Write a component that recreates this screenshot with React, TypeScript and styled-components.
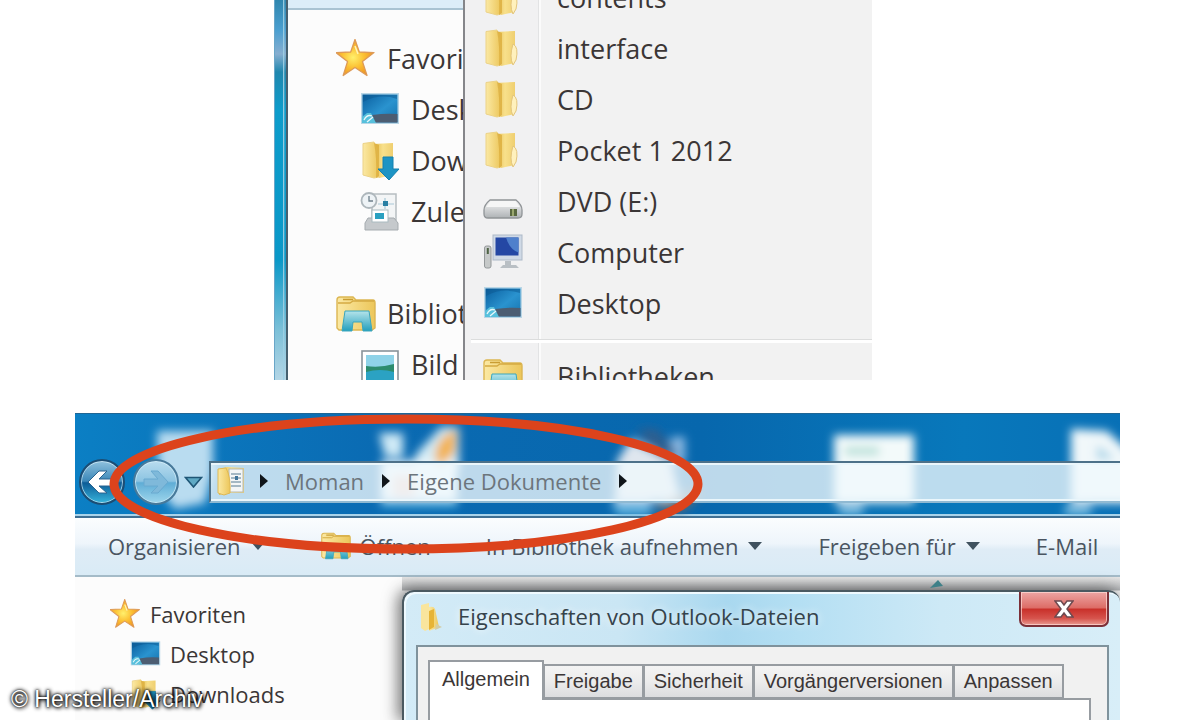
import React from "react";
import styled, { createGlobalStyle } from "styled-components";

const GlobalStyle = createGlobalStyle`
  * { box-sizing: border-box; }
  body {
    margin: 0;
    background: #ffffff;
    font-family: "Open Sans", "Noto Sans", sans-serif;
    color: #3b3636;
  }
  button { font: inherit; color: inherit; border: 0; padding: 0; background: none; }
  a { color: inherit; text-decoration: none; }
  ul { list-style: none; margin: 0; padding: 0; }
  svg { display: block; flex: none; }
`;

const Page = styled.main`
  position: relative;
  display: flex;
  flex-direction: column;
  gap: 33px;
  height: 100vh;
  min-height: 720px;
  overflow: hidden;
`;

/* ---------- upper window: jump menu over the navigation pane ---------- */

const MenuShot = styled.section`
  display: grid;
  grid-template-columns: 14px 175px 1fr;
  flex: none;
  height: 380px;
  margin: 0 328px 0 274px;
  overflow: hidden;
`;

const WindowEdge = styled.div`
  border-left: 1px solid #6aa6c8;
  border-right: 2px solid #46606f;
  background: linear-gradient(90deg, transparent 70%, #9fd0e4 76%, transparent 90%),
    linear-gradient(#2f86ae 0, #4a9fd0 30px, #86aed0 54px, #1f87ae 72px, #0d9ccb 110px, #0a98c8 260px, #7cc0d8 330px, #b4d6e6 380px);
`;

const NavPane = styled.nav`
  overflow: hidden;
  background: #fcfcfc;
  font-size: 27px;
`;

const NavBand = styled.div`
  height: 10px;
  margin-bottom: 23px;
  border-bottom: 2px solid #a9c3d2;
  background: #dcedf8;
`;

const NavGroup = styled.ul`
  margin-bottom: 51px;
`;

const NavLink = styled.a<{ $nested?: boolean }>`
  display: flex;
  align-items: center;
  gap: 11px;
  height: 51px;
  padding-left: ${(p) => (p.$nested ? 72 : 48)}px;
  white-space: nowrap;
`;

const JumpMenu = styled.div`
  min-width: 0;
  overflow: hidden;
  border-left: 2px solid #85868a;
  background: linear-gradient(90deg, #f1f1f2 73px, #e2e3e4 73px, #e2e3e4 74px, #fbfbfb 74px, #fbfbfb 76px, #f2f2f2 76px);
  font-size: 27px;
`;

const JumpList = styled.ul<{ $scrolled?: boolean }>`
  margin-top: ${(p) => (p.$scrolled ? "-28px" : "0")};
`;

const JumpItem = styled.button`
  display: flex;
  align-items: center;
  gap: 34px;
  width: 100%;
  height: 51px;
  padding-left: 18px;
  text-align: left;
  white-space: nowrap;
`;

const JumpDivider = styled.hr`
  height: 4px;
  margin: 10px 0 8px 6px;
  border: 0;
  border-top: 1px solid #dcdddd;
  background: #ffffff;
`;

/* ---------- lower window: explorer with properties dialog ---------- */

const Explorer = styled.section`
  position: relative;
  display: flex;
  flex: 1;
  flex-direction: column;
  margin: 0 80px 0 75px;
  overflow: hidden;
  font-size: 22px;
`;

const GlassBar = styled.header`
  position: relative;
  display: flex;
  flex: none;
  align-items: center;
  height: 105px;
  padding: 34px 0 0 4px;
  border-bottom: 2px solid #3f6f93;
  background: linear-gradient(90deg, #0b7fc4, #0a6ab2 30%, #0767ad 60%, #0878bb 85%, #0870b6);
  box-shadow: inset 0 1px 0 #1f6695, inset 0 -2px 0 #a9d3ea;
`;

const Reflections = styled.svg`
  position: absolute;
  inset: 0;
  width: 100%;
  height: 100%;
`;

const RoundNav = styled.button<{ $faded?: boolean }>`
  position: relative;
  display: grid;
  place-items: center;
  flex: none;
  width: 46px;
  height: 46px;
  margin-right: ${(p) => (p.$faded ? 5 : 8)}px;
  border: 2px solid ${(p) => (p.$faded ? "#47799a" : "#1c4d74")};
  border-radius: 50%;
  background: ${(p) =>
    p.$faded
      ? "linear-gradient(#b9dcee 0, #8cc4e2 48%, #5fadd6 52%, #9ed6ec)"
      : "linear-gradient(#8fc1de 0, #3b87b8 48%, #0c5c97 52%, #37b4dc)"};
  box-shadow: inset 0 0 0 1px rgba(220, 242, 252, 0.7);
`;

const HistoryButton = styled.button`
  position: relative;
  margin-right: 6px;
`;

const AddressBar = styled.nav`
  position: relative;
  display: flex;
  flex: 1;
  align-items: center;
  height: 42px;
  padding: 0 0 2px 6px;
  border: solid #4d7189;
  border-width: 2px 0 2px 2px;
  border-bottom-color: #8fb9d2;
  background: rgba(240, 248, 252, 0.78);
  box-shadow: inset 0 2px 0 #eaf6fb, inset 0 -2px 0 #eaf6fb;
`;

const PlaceIcon = styled.span`
  margin-right: 12px;
`;

const Crumb = styled.button`
  margin: 0 17px;
  color: #6c757c;
  white-space: nowrap;
`;

const CommandBar = styled.div`
  display: flex;
  flex: none;
  align-items: center;
  height: 59px;
  padding: 0 0 2px 33px;
  border-bottom: 2px solid #a4bbc8;
  background: linear-gradient(#fbfdfe, #eef5fb 45%, #dfecf6 55%, #d9ebf6);
  color: #4a5561;
`;

const Command = styled.button`
  display: flex;
  flex: none;
  align-items: center;
  gap: 9px;
  margin-right: 55px;
  white-space: nowrap;
`;

const Content = styled.div`
  display: grid;
  flex: 1;
  grid-template-columns: 327px 1fr;
  min-height: 0;
  background: #fcfcfc;
`;

const SideNav = styled.nav`
  padding-top: 17px;
`;

const SideLink = styled.a<{ $nested?: boolean }>`
  display: flex;
  align-items: center;
  gap: 9px;
  height: 40px;
  padding-left: ${(p) => (p.$nested ? 55 : 35)}px;
  white-space: nowrap;
`;

const DialogArea = styled.div`
  display: flex;
  position: relative;
  min-width: 0;
  padding-top: 13px;
  background: linear-gradient(#e6e6e6, #b4b6b8 13px, transparent 14px);
`;

const SortMark = styled.svg`
  position: absolute;
  right: 176px;
  top: 2px;
`;

const Dialog = styled.section`
  display: flex;
  flex: 1;
  flex-direction: column;
  min-width: 0;
  padding-right: 11px;
  border: solid #4a5961;
  border-width: 2px 0 0 2px;
  border-radius: 12px 12px 0 0;
  background: linear-gradient(90deg, #d3ebf7, #cae6f4 30%, #a9d8ef 45%, #b4dff3 55%, #cde9f6 75%, #d8eef8);
  box-shadow: -3px 0 15px 1px rgba(40, 40, 40, 0.65), inset 2px 2px 0 #effaff;
`;

const DialogTitle = styled.header`
  display: flex;
  align-items: flex-start;
  height: 53px;
  padding-left: 14px;
`;

const DialogName = styled.h2`
  flex: 1;
  margin: 0 0 0 12px;
  font-size: 22px;
  font-weight: 400;
  line-height: 49px;
  color: #35434b;
  white-space: nowrap;
  text-shadow: 0 0 8px #ffffff;
`;

const TitleIcon = styled.div`
  padding-top: 10px;
`;

const CloseButton = styled.button`
  display: grid;
  place-items: center;
  width: 90px;
  height: 35px;
  border: 2px solid #7c3038;
  border-top: 0;
  border-radius: 0 0 7px 7px;
  background: linear-gradient(#eda6a4, #dd6c66 48%, #c9302a 52%, #d6544d 80%, #e99a90);
  box-shadow: inset 0 0 0 1px rgba(255, 220, 215, 0.7);
`;

const DialogBody = styled.div`
  display: flex;
  flex: 1;
  flex-direction: column;
  margin-left: 12px;
  padding: 13px 16px 0 10px;
  border: 2px solid #7f929c;
  border-bottom: 0;
  background: #f1f1f1;
`;

const TabList = styled.div`
  display: flex;
  align-items: flex-end;
  height: 38px;
`;

const Tab = styled.button<{ $active?: boolean }>`
  position: relative;
  flex: none;
  height: ${(p) => (p.$active ? 40 : 34)}px;
  margin: ${(p) => (p.$active ? "0 0 -2px" : "0")};
  padding: ${(p) => (p.$active ? "0 12px 3px" : "0 9px")};
  z-index: ${(p) => (p.$active ? 1 : 0)};
  border: 2px solid #979ca1;
  border-bottom-width: ${(p) => (p.$active ? 0 : 1)}px;
  border-left-width: ${(p) => (p.$active ? 2 : 1)}px;
  background: ${(p) => (p.$active ? "#ffffff" : "linear-gradient(#f4f4f4, #ececec 50%, #dcdddf)")};
  font-family: "Liberation Sans", Arial, sans-serif;
  font-size: 20px;
  white-space: nowrap;
`;

const TabPanel = styled.div`
  flex: 1;
  border: 2px solid #979ca1;
  border-bottom: 0;
  background: #ffffff;
`;

const Highlight = styled.svg`
  position: absolute;
  left: 30px;
  top: 0;
  pointer-events: none;
`;

const Credit = styled.small`
  position: absolute;
  left: 11px;
  bottom: 7px;
  color: #ffffff;
  font-family: "Liberation Sans", Arial, sans-serif;
  font-size: 23px;
  line-height: 28px;
  text-shadow: 0 0 2px #000000, 0 0 4px #000000, 1px 1px 4px #000000;
`;

/* ---------- icons ---------- */

type IconProps = { size?: number };

const Gradients = () => (
  <svg width="0" height="0" style={{ position: "absolute" }} aria-hidden="true">
    <defs>
      <linearGradient id="gold" x1="0" x2="1">
        <stop offset="0" stopColor="#fbe9a4" />
        <stop offset="1" stopColor="#ecc65a" />
      </linearGradient>
      <linearGradient id="goldBack" x1="0" x2="1">
        <stop offset="0" stopColor="#e3b849" />
        <stop offset="0.5" stopColor="#f8e08b" />
        <stop offset="1" stopColor="#efcf70" />
      </linearGradient>
      <radialGradient id="star" cx="0.45" cy="0.5" r="0.55">
        <stop offset="0" stopColor="#fff06c" />
        <stop offset="0.5" stopColor="#fcc235" />
        <stop offset="1" stopColor="#ef9420" />
      </radialGradient>
      <linearGradient id="screen" x1="0" y1="0" x2="1" y2="1">
        <stop offset="0" stopColor="#0a5f9f" />
        <stop offset="0.55" stopColor="#2a93cf" />
        <stop offset="1" stopColor="#1673ae" />
      </linearGradient>
      <linearGradient id="metal" x1="0" y1="0" x2="0" y2="1">
        <stop offset="0" stopColor="#f8f8f8" />
        <stop offset="1" stopColor="#aeb2b5" />
      </linearGradient>
      <linearGradient id="teal" x1="0" y1="0" x2="0" y2="1">
        <stop offset="0" stopColor="#b5e4ea" />
        <stop offset="1" stopColor="#239fbd" />
      </linearGradient>
    </defs>
  </svg>
);

const StarIcon = ({ size = 40 }: IconProps) => (
  <svg width={size} height={size} viewBox="0 0 40 40">
    <path d="M19 .5l4.300 12.500 14.700.6-11.500 9L31 36.500 19 28.500 7.200 36.500 11.500 22.600 0 13.600l14.700-.6z" fill="url(#star)" stroke="#dd9a58" strokeWidth="1.300" strokeLinejoin="round" />
    <path d="M19 7l3 8" stroke="#fff3b8" strokeWidth="1.500" />
  </svg>
);

const DesktopIcon = ({ size = 40 }: IconProps) => (
  <svg width={size} height={size} viewBox="0 0 40 40">
    <rect x="1" y="3" width="38" height="31" fill="#b9d6e6" />
    <rect x="2.500" y="4.500" width="35" height="28" fill="url(#screen)" />
    <path d="M12 25q14-2 25.500-1v8.500H12z" fill="#4c5d72" />
    <path d="M3 12Q20 3 37 9V5H3z" fill="#0b5790" opacity=".5" />
    <path d="M2 33v-6l5-4h4l5 10z" fill="#57c0dc" />
    <path d="M4 30q3-6 8-4M7 32l6-5" fill="none" stroke="#e8f8fb" strokeWidth="1.300" />
  </svg>
);

const FolderShape = () => (
  <>
    <path d="M12 3l20-1v32l-14 3z" fill="url(#goldBack)" />
    <path d="M3 2.500l11-1.500q4 10 4 35l-4 1-11-3z" fill="url(#gold)" stroke="#ecd287" strokeWidth="1" />
    <path d="M14 2l5 2v31l-3 2Q17 16 14 2z" fill="#dcae3c" opacity=".8" />
    <path d="M30 15q6 3 3 16l-3 5q-4-8 0-21z" fill="#fff1bd" stroke="#e3c57c" strokeWidth="1" />
  </>
);

const FolderIcon = ({ size = 40 }: IconProps) => (
  <svg width={size} height={size} viewBox="0 0 40 40">
    <FolderShape />
  </svg>
);

const DownloadsIcon = ({ size = 40 }: IconProps) => (
  <svg width={size} height={size} viewBox="0 0 40 40">
    <path d="M12 3l20-1v32l-14 3z" fill="url(#goldBack)" transform="translate(1 0)" />
    <path d="M3 2.500l11-1.500q5 10 5 35l-5 1-11-3z" fill="url(#gold)" stroke="#ecd287" strokeWidth="1" />
    <path d="M14 2l5 2v31l-3 2Q17 16 14 2z" fill="#dcae3c" opacity=".8" />
    <path d="M23 16h10v12h6L29 39 18 28h5z" fill="#1d94c4" stroke="#1580ae" strokeWidth="1" />
  </svg>
);

const RecentIcon = ({ size = 40 }: IconProps) => (
  <svg width={size} height={size} viewBox="0 0 40 40">
    <rect x="12" y="2" width="24" height="26" fill="#f3f5f6" stroke="#b6bdc1" strokeWidth="1.500" />
    <path d="M18 12h16M25 6v11" stroke="#a9c8d6" strokeWidth="1.200" />
    <rect x="23" y="9" width="5" height="5" fill="#297fa3" />
    <path d="M8 26h26l4 5v7H5v-7z" fill="#c5c9cc" stroke="#a5abaf" strokeWidth="1" />
    <rect x="12" y="18" width="16" height="12" fill="#fff" stroke="#aabbc0" />
    <rect x="15" y="21" width="9" height="6" fill="#2aa0c0" />
    <circle cx="9" cy="8.500" r="7.500" fill="#eef3f6" stroke="#aeb7bc" strokeWidth="1.800" />
    <path d="M9 4v5h4" stroke="#6d7f8a" strokeWidth="1.300" fill="none" />
  </svg>
);

const LibraryIcon = ({ size = 40 }: IconProps) => (
  <svg width={size} height={size} viewBox="0 0 40 40">
    <path d="M1 6q0-3 3-3h13l3 3h17q2 0 2 3v25l-3 2H3l-2-2z" fill="url(#gold)" stroke="#dcb652" strokeWidth="1.400" />
    <path d="M2 9h12l3-2h21" fill="none" stroke="#d5ab43" strokeWidth="1.300" />
    <path d="M7 5.500h10" stroke="#c99d33" strokeWidth="1.500" />
    <path d="M9 17h24l3 20h-9l-1-9h-9l-1 9H6z" fill="url(#teal)" stroke="#3ba6bd" strokeWidth="1" />
  </svg>
);

const PicturesIcon = ({ size = 40 }: IconProps) => (
  <svg width={size} height={size} viewBox="0 0 40 40">
    <rect x="2" y="6" width="36" height="33" fill="#fff" stroke="#899399" strokeWidth="1.600" />
    <rect x="6" y="10" width="28" height="25" fill="#8fd3e8" />
    <path d="M6 21q14 2 28-2v9H6z" fill="#2c8c6e" />
    <path d="M6 27q14-4 28 0v8H6z" fill="#2ba2c3" />
  </svg>
);

const DriveIcon = ({ size = 40 }: IconProps) => (
  <svg width={size} height={size} viewBox="0 0 40 40">
    <path d="M7 18h26q6 5 6 10v4q0 4-4 4H5q-4 0-4-4v-4q0-5 6-10z" fill="url(#metal)" stroke="#909497" strokeWidth="1.300" />
    <path d="M8 19h24l5 6H3z" fill="#f6f6f6" />
    <rect x="27" y="27" width="7" height="7" fill="#59683f" />
    <path d="M30 27v7" stroke="#dce7a0" />
  </svg>
);

const ComputerIcon = ({ size = 40 }: IconProps) => (
  <svg width={size} height={size} viewBox="0 0 40 40">
    <rect x="10" y="2" width="29" height="25" fill="#cfd9e6" stroke="#adb9c7" />
    <rect x="12.500" y="4.500" width="23" height="18" fill="#2447a4" />
    <path d="M23 4.500h12.500v15q-9-3-12.500-15z" fill="#4f80cc" />
    <path d="M22 28h6v4h5l3 3H17l3-3h2z" fill="#b9bfc4" />
    <rect x="1.500" y="13" width="6.500" height="22" rx="2" fill="#c6c9c9" stroke="#94989a" />
    <path d="M4.800 15v6" stroke="#4e6345" strokeWidth="2" />
  </svg>
);

const DocumentsIcon = () => (
  <svg width="30" height="30" viewBox="0 0 30 30">
    <path d="M2 3l8-2 17 1v25H9L2 29z" fill="url(#goldBack)" />
    <rect x="12" y="3" width="14" height="23" fill="#f4f6f6" stroke="#b4b9b6" />
    <path d="M14 8h10M14 12h10M14 16h10M14 20h10" stroke="#8ba4b3" strokeWidth="1.300" />
    <rect x="18" y="10" width="3" height="4" fill="#41759a" />
    <path d="M1 3l8-1q5 9 4 25l-6 2-6-2z" fill="url(#gold)" stroke="#dfb955" />
  </svg>
);

const TitleFolderIcon = () => (
  <svg width="28" height="30" viewBox="0 0 28 30">
    <path d="M3 3l8-2v26l-4 2-4-3z" fill="#f9e59d" />
    <path d="M11 5q5-1 6 2l4 18-10 4z" fill="url(#gold)" />
    <path d="M11 9l5-2v18l-5 3z" fill="#e6b437" />
    <path d="M18 22l6 3-7 3z" fill="#d3cda5" />
  </svg>
);

const BackArrow = () => (
  <svg width="34" height="30" viewBox="0 0 34 30">
    <path d="M3 15L14 4h8l-8 8h16v7H14l8 7h-8z" fill="#ffffff" stroke="#2a638f" strokeWidth="1" strokeLinejoin="round" />
  </svg>
);

const ForwardArrow = () => (
  <svg width="34" height="30" viewBox="0 0 34 30">
    <path d="M29 15L19 4h-7l7 8H5v7h14l-7 7h7z" fill="#7fb9da" stroke="#6aaad0" strokeWidth="1" strokeLinejoin="round" />
  </svg>
);

const CrumbArrow = () => (
  <svg width="9" height="14" viewBox="0 0 9 14">
    <path d="M1 0l8 7-8 7z" fill="#10151a" />
  </svg>
);

const DownArrow = () => (
  <svg width="16" height="9" viewBox="0 0 16 9">
    <path d="M1 1h14L8 9z" fill="#40525f" />
  </svg>
);

/* ---------- data ---------- */

const jumpItems = [
  { label: "contents", icon: FolderIcon },
  { label: "interface", icon: FolderIcon },
  { label: "CD", icon: FolderIcon },
  { label: "Pocket 1 2012", icon: FolderIcon },
  { label: "DVD (E:)", icon: DriveIcon },
  { label: "Computer", icon: ComputerIcon },
  { label: "Desktop", icon: DesktopIcon },
];

const favourites = [
  { label: "Favoriten", icon: StarIcon, nested: false },
  { label: "Desktop", icon: DesktopIcon, nested: true },
  { label: "Downloads", icon: DownloadsIcon, nested: true },
];

const panes = [
  [...favourites, { label: "Zuletzt", icon: RecentIcon, nested: true }],
  [
    { label: "Bibliotheken", icon: LibraryIcon, nested: false },
    { label: "Bild", icon: PicturesIcon, nested: true },
  ],
];

const tabs = ["Allgemein", "Freigabe", "Sicherheit", "Vorgängerversionen", "Anpassen"];

export default function App() {
  return (
    <>
      <GlobalStyle />
      <Page>
        <Gradients />
        <MenuShot>
          <WindowEdge />
          <NavPane>
            <NavBand />
            {panes.map((group) => (
              <NavGroup key={group[0].label}>
                {group.map(({ label, icon: Icon, nested }) => (
                  <li key={label}>
                    <NavLink href="#" $nested={nested}>
                      <Icon />
                      {label}
                    </NavLink>
                  </li>
                ))}
              </NavGroup>
            ))}
          </NavPane>
          <JumpMenu>
            <JumpList $scrolled>
              {jumpItems.map(({ label, icon: Icon }) => (
                <li key={label}>
                  <JumpItem type="button">
                    <Icon />
                    {label}
                  </JumpItem>
                </li>
              ))}
            </JumpList>
            <JumpDivider />
            <JumpList>
              <li>
                <JumpItem type="button">
                  <LibraryIcon />
                  Bibliotheken
                </JumpItem>
              </li>
            </JumpList>
          </JumpMenu>
        </MenuShot>

        <Explorer>
          <GlassBar>
            <Reflections viewBox="0 0 1045 103" preserveAspectRatio="none" aria-hidden="true">
              <defs>
                <filter id="soft" x="-50%" y="-50%" width="200%" height="200%">
                  <feGaussianBlur stdDeviation="5" />
                </filter>
              </defs>
              <g filter="url(#soft)">
                <path d="M82 18h56v40l-8 32-30 6-16-20z" fill="#b9dcf0" />
                <path d="M304 20h24v24h-18z" fill="#cfeaf6" />
                <path d="M342 40l24-26h18v44h-50z" fill="#d5ecf5" />
                <rect x="306" y="48" width="76" height="40" fill="#eef6fa" />
                <path d="M306 86h76v8h-76z" fill="#4db3e0" />
                <path d="M360 44q0-20 22-28l-2 24-16 14z" fill="#f3b252" />
                <rect x="318" y="62" width="22" height="22" fill="#f3c9bd" />
                <path d="M542 48l14-22 40 22 10 40h-66z" fill="#dfe6ee" />
                <path d="M596 24h14v26h-14z" fill="#8db9e2" />
                <path d="M562 16h20l22 26-20 2z" fill="#2f5f8f" />
                <path d="M536 88h40v14h-34z" fill="#62b3df" />
                <path d="M574 97l44-22 10 6-20 18z" fill="#5f6b74" />
                <rect x="759" y="22" width="80" height="68" fill="#f3fafa" />
                <rect x="770" y="34" width="34" height="8" fill="#b4ded6" />
                <rect x="764" y="92" width="24" height="10" fill="#7fc0e2" />
                <path d="M996 16l36 2 24 22v50h-60z" fill="#f1f8fa" />
                <path d="M1022 32l18 14h-18z" fill="#a8d4e8" />
                <rect x="990" y="92" width="26" height="10" fill="#7fc0e2" />
              </g>
            </Reflections>
            <RoundNav type="button" aria-label="Zurück">
              <BackArrow />
            </RoundNav>
            <RoundNav type="button" aria-label="Vorwärts" $faded>
              <ForwardArrow />
            </RoundNav>
            <HistoryButton type="button" aria-label="Verlauf">
              <svg width="19" height="12" viewBox="0 0 19 12">
                <path d="M1.500 1.500h16L9.500 11z" fill="#5fa9c4" stroke="#1f5676" strokeWidth="1.600" />
              </svg>
            </HistoryButton>
            <AddressBar aria-label="Adresse">
              <PlaceIcon>
                <DocumentsIcon />
              </PlaceIcon>
              <CrumbArrow />
              <Crumb type="button">Moman</Crumb>
              <CrumbArrow />
              <Crumb type="button">Eigene Dokumente</Crumb>
              <CrumbArrow />
            </AddressBar>
          </GlassBar>

          <CommandBar>
            <Command type="button">
              Organisieren
              <DownArrow />
            </Command>
            <Command type="button">
              <LibraryIcon size={30} />
              Öffnen
            </Command>
            <Command type="button">
              In Bibliothek aufnehmen
              <DownArrow />
            </Command>
            <Command type="button">
              Freigeben für
              <DownArrow />
            </Command>
            <Command type="button">E-Mail</Command>
          </CommandBar>

          <Content>
            <SideNav>
              <ul>
                {favourites.map(({ label, icon: Icon, nested }) => (
                  <li key={label}>
                    <SideLink href="#" $nested={nested}>
                      <Icon size={31} />
                      {label}
                    </SideLink>
                  </li>
                ))}
              </ul>
            </SideNav>
            <DialogArea>
              <SortMark width="14" height="9" viewBox="0 0 14 9">
                <path d="M0 9l8-8 5 6-7 1z" fill="#3f8088" />
              </SortMark>
              <Dialog role="dialog" aria-labelledby="dialog-name">
                <DialogTitle>
                  <TitleIcon>
                    <TitleFolderIcon />
                  </TitleIcon>
                  <DialogName id="dialog-name">Eigenschaften von Outlook-Dateien</DialogName>
                  <CloseButton type="button" aria-label="Schließen">
                    <svg width="20" height="18" viewBox="0 0 20 18">
                      <path d="M1 1h6l3 4 3-4h6l-6 8 6 8h-6l-3-4-3 4H1l6-8z" fill="#fff" stroke="#6d4a50" strokeWidth="1.500" />
                    </svg>
                  </CloseButton>
                </DialogTitle>
                <DialogBody>
                  <TabList role="tablist">
                    {tabs.map((label, index) => (
                      <Tab key={label} type="button" role="tab" aria-selected={index === 0} $active={index === 0}>
                        {label}
                      </Tab>
                    ))}
                  </TabList>
                  <TabPanel role="tabpanel" />
                </DialogBody>
              </Dialog>
            </DialogArea>
          </Content>

          <Highlight width="602" height="144" viewBox="0 0 602 144" aria-hidden="true">
            <ellipse cx="301" cy="71" rx="292" ry="65" fill="none" stroke="#dc431c" strokeWidth="9" />
          </Highlight>
        </Explorer>

        <Credit>© Hersteller/Archiv</Credit>
      </Page>
    </>
  );
}
